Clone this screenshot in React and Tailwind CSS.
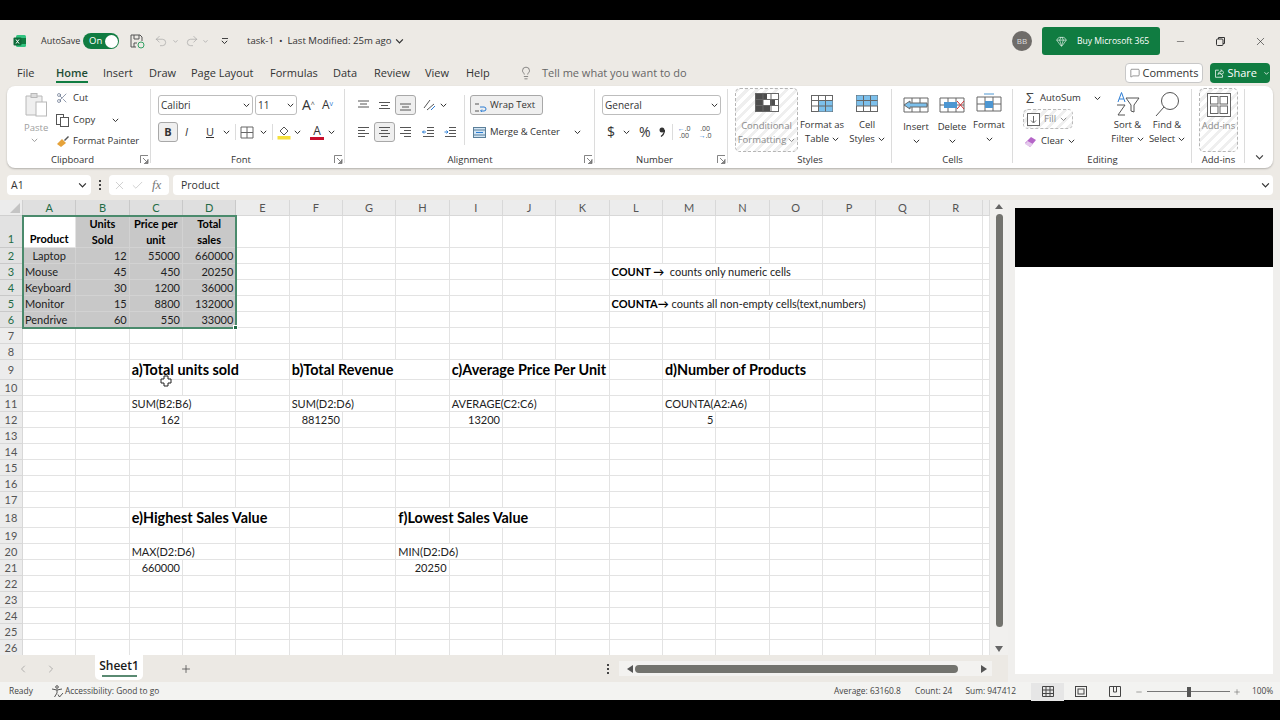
import React from 'react';
import { Scissors, Lightbulb, Gem, MessageSquare, Undo2, Redo2, X, Check, Minus, Plus, ChevronLeft, ChevronRight } from 'lucide-react';

const ui = "font-['Open_Sans',sans-serif]";
const hatch = 'bg-[repeating-linear-gradient(135deg,#efefef_0,#efefef_3px,#ffffff_3px,#ffffff_7px)]';

function Chev({ className = '' }) {
    return (
        <svg width="7" height="5" viewBox="0 0 7 5" className={'shrink-0 ' + className} fill="none" stroke="currentColor" strokeWidth="1">
            <path d="M0.8 0.8 3.5 3.6 6.2 0.8" />
        </svg>
    );
}

function Launcher() {
    return (
        <svg width="9" height="9" viewBox="0 0 9 9" className="absolute right-[2px] bottom-[4px] text-[#666]" fill="none" stroke="currentColor" strokeWidth="0.8">
            <path d="M0.5 8V0.5H8M8 4V8.5H4M3 3 7.5 7.5M7.5 5V7.5H5" />
        </svg>
    );
}

function Group({ label, width, labelPad = '', line = true, children }) {
    return (
        <div className={'relative flex flex-col shrink-0 h-full ' + width}>
            <div className="flex-1 min-h-0">{children}</div>
            <div className={'h-[17px] pt-[2px] text-center text-[9.5px] leading-[14px] text-[#333] ' + labelPad}>{label}</div>
            {line && <div className="absolute right-0 top-[3px] bottom-[5px] w-px bg-[#dcdcdc]" />}
        </div>
    );
}

function Lines({ kind }) {
    // alignment glyphs, one drawing per button
    const paths = {
        top: 'M1 2H12M3 5H10M1 8H12',
        middle: 'M1 3.500H12M3 6.500H10M1 9.500H12',
        bottom: 'M1 5H12M3 8H10M1 11H12',
        left: 'M1 1.500H12M1 4.500H8M1 7.500H12M1 10.500H8',
        center: 'M1 1.500H12M3 4.500H10M1 7.500H12M3 10.500H10',
        right: 'M1 1.500H12M5 4.500H12M1 7.500H12M5 10.500H12',
    };
    return (
        <svg width="13" height="12" viewBox="0 0 13 12" fill="none" stroke="#555" strokeWidth="1">
            <path d={paths[kind]} />
        </svg>
    );
}

function BigButton({ icon, lines, width, iconH = 'h-[31px]', chevronOwnLine }) {
    return (
        <div className={'flex flex-col items-center shrink-0 text-[#333] ' + width}>
            <div className={'flex items-center justify-center ' + iconH}>{icon}</div>
            <div className="text-[9.5px] leading-[14px] text-center whitespace-nowrap">
                {lines.map((l, i) => <div key={i} className="flex items-center justify-center gap-[3px]">{l}{i === lines.length - 1 && !chevronOwnLine && <Chev />}</div>)}
                {chevronOwnLine && <div className="flex justify-center h-[14px] items-center"><Chev /></div>}
            </div>
        </div>
    );
}

function TableIcon({ fill }) {
    return (
        <svg width="24" height="22" viewBox="0 0 24 22" fill="none" stroke="#666" strokeWidth="1">
            <rect x="1.500" y="2.500" width="21" height="16" fill="#fff" />
            {fill}
            <path d="M1.500 7.500H22.500M1.500 13H22.500M8.500 2.500V18.500M15.500 2.500V18.500" />
        </svg>
    );
}

function Clipboard() {
    return (
        <Group label="Clipboard" width="w-[144px]" labelPad="pr-[13px]">
            <Launcher />
            <div className="flex h-full">
                <div className="w-[48px] pl-[17px] pt-[6px] flex flex-col text-[#a0a0a0]">
                    <svg width="24" height="26" viewBox="0 0 24 26" fill="none" stroke="#b8b8b8">
                        <path d="M2 4H18V23H2Z" fill="#efefef" />
                        <rect x="7" y="1.500" width="6" height="4" fill="#ddd" />
                        <rect x="12" y="10" width="10.500" height="14" fill="#fff" />
                    </svg>
                    <div className="mt-[3px] text-[9.5px] leading-[14px]">Paste</div>
                    <Chev className="ml-[7px] mt-[3px]" />
                </div>
                <div className="pt-[2px] pl-[1px] text-[9.5px] text-[#333]">
                    <div className="flex items-center h-[20px] gap-[5px]"><Scissors size={12} strokeWidth={1.200} className="text-[#4a5a78]" /><span className="w-[56px]">Cut</span></div>
                    <div className="flex items-center h-[24px] gap-[4px]">
                        <svg width="13" height="13" viewBox="0 0 13 13" fill="none" stroke="#555"><rect x="0.500" y="0.500" width="7" height="10" /><rect x="4.500" y="3.500" width="8" height="9" fill="#fff" /></svg>
                        <span>Copy</span><Chev className="ml-[13px]" />
                    </div>
                    <div className="flex items-center h-[19px] gap-[3px] whitespace-nowrap">
                        <svg width="14" height="13" viewBox="0 0 14 13"><path d="M1 9 6 4 10 8 5 12Z" fill="#e5a23a" /><path d="M8 5 12 1 13 2 9 6Z" fill="#555" /></svg>
                        Format Painter
                    </div>
                </div>
            </div>
        </Group>
    );
}

function FontGroup() {
    return (
        <Group label="Font" width="w-[194px]" labelPad="pr-[14px]">
            <Launcher />
            <div className="pl-[7px] pt-[9px] text-[#333]">
                <div className="flex items-center h-[20px]">
                    <div className="w-[95px] h-[20px] rounded-[3px] border border-[#bdbdbd] flex items-center justify-between px-[2px] text-[10px]">Calibri<Chev /></div>
                    <div className="ml-[2px] w-[42px] h-[20px] rounded-[3px] border border-[#bdbdbd] flex items-center justify-between px-[2px] text-[10px]">11<Chev /></div>
                    <span className="ml-[5px] text-[14px] leading-none">A<sup className="text-[7px] text-[#444]">^</sup></span>
                    <span className="ml-[7px] text-[12px] leading-none">A<sup className="text-[7px] text-[#2b7cd3]">v</sup></span>
                </div>
                <div className="flex items-center h-[20px] mt-[7px]">
                    <div className="w-[20px] h-[20px] rounded-[3px] border border-[#a8a8a8] bg-[#efefef] flex items-center justify-center text-[11px] font-bold">B</div>
                    <span className="ml-[7px] w-[8px] italic text-[11px]">I</span>
                    <span className="ml-[13px] underline text-[11px]">U</span>
                    <Chev className="ml-[9px]" />
                    <div className="ml-[5px] w-px h-[16px] bg-[#dcdcdc]" />
                    <svg width="14" height="13" viewBox="0 0 14 13" className="ml-[4px]" fill="none" stroke="#666"><path d="M1 1H13V12H1ZM7 1V12M1 6.500H13" /></svg>
                    <Chev className="ml-[6px]" />
                    <div className="ml-[5px] w-px h-[16px] bg-[#dcdcdc]" />
                    <svg width="14" height="15" viewBox="0 0 14 15" className="ml-[4px]"><path d="M3 6 7 2 11 6 7 10Z" fill="none" stroke="#555" /><rect x="0.500" y="11" width="13" height="3.500" fill="#f5e03a" /></svg>
                    <Chev className="ml-[3px]" />
                    <div className="ml-[9px] flex flex-col items-center w-[14px] leading-[11px] text-[12px]">A<div className="w-[14px] h-[3px] bg-[#c8102e] mt-[1px]" /></div>
                    <Chev className="ml-[4px]" />
                </div>
            </div>
        </Group>
    );
}

function Alignment() {
    return (
        <Group label="Alignment" width="w-[250px]">
            <Launcher />
            <div className="flex pl-[8px] pt-[9px] text-[#333]">
                <div className="w-[112px] border-r border-[#dcdcdc] h-[50px]">
                    <div className="flex items-center h-[20px]">
                        <div className="w-[21px] flex justify-center"><Lines kind="top" /></div>
                        <div className="w-[21px] flex justify-center"><Lines kind="middle" /></div>
                        <div className="w-[21px] h-[20px] rounded-[3px] border border-[#a8a8a8] bg-[#efefef] flex justify-center items-center"><Lines kind="bottom" /></div>
                        <svg width="14" height="14" viewBox="0 0 14 14" className="ml-[6px]" fill="none" stroke="#555"><path d="M2 10 8 2M5 12 12 6" /><path d="M9 12 13 8" stroke="#2b7cd3" /></svg>
                        <Chev className="ml-[4px]" />
                    </div>
                    <div className="flex items-center h-[20px] mt-[7px]">
                        <div className="w-[21px] flex justify-center"><Lines kind="left" /></div>
                        <div className="w-[21px] h-[20px] rounded-[3px] border border-[#a8a8a8] bg-[#efefef] flex justify-center items-center"><Lines kind="center" /></div>
                        <div className="w-[21px] flex justify-center"><Lines kind="right" /></div>
                        <svg width="13" height="12" viewBox="0 0 13 12" className="ml-[6px]" fill="none" stroke="#555"><path d="M5 1.500H12M5 4.500H12M5 7.500H12M1 10.500H12" /><path d="M4 6H0.500M2 4.500 0.500 6 2 7.500" stroke="#2b7cd3" /></svg>
                        <svg width="13" height="12" viewBox="0 0 13 12" className="ml-[9px]" fill="none" stroke="#555"><path d="M5 1.500H12M5 4.500H12M5 7.500H12M1 10.500H12" /><path d="M0.500 6H4M2.500 4.500 4 6 2.500 7.500" stroke="#2b7cd3" /></svg>
                    </div>
                </div>
                <div className="pl-[5px]">
                    <div className="w-[73px] h-[20px] rounded-[3px] border border-[#a8a8a8] bg-[#efefef] flex items-center pl-[3px] gap-[3px] text-[9.5px] whitespace-nowrap">
                        <svg width="13" height="13" viewBox="0 0 13 13" fill="none" stroke="#555"><path d="M1 5H5M1 12H5" /><path d="M6 8H10Q12 8 12 10T10 12H7M8 10.500 6.500 12 8 13" stroke="#2b7cd3" /></svg>
                        Wrap Text
                    </div>
                    <div className="flex items-center h-[20px] mt-[7px] pl-[3px] text-[9.5px] whitespace-nowrap">
                        <svg width="13" height="13" viewBox="0 0 13 13" fill="none" stroke="#5b7f99"><rect x="0.500" y="1.500" width="12" height="10" fill="#d3e6f5" /><path d="M0.500 4H12.500M0.500 9H12.500" /><path d="M3 6.500H10" stroke="#2b7cd3" /></svg>
                        <span className="ml-[4px]">Merge &amp; Center</span>
                        <Chev className="ml-[14px]" />
                    </div>
                </div>
            </div>
        </Group>
    );
}

function NumberGroup() {
    return (
        <Group label="Number" width="w-[133px]" labelPad="pr-[14px]">
            <Launcher />
            <div className="pl-[7px] pt-[9px] text-[#333]">
                <div className="w-[119px] h-[20px] rounded-[3px] border border-[#bdbdbd] flex items-center justify-between px-[2px] text-[10px]">General<Chev /></div>
                <div className="flex items-center h-[20px] mt-[7px]">
                    <span className="ml-[5px] text-[14px] leading-none">$</span>
                    <Chev className="ml-[8px]" />
                    <span className="ml-[9px] text-[14px] leading-none">%</span>
                    <svg width="6" height="10" viewBox="0 0 6 10" className="ml-[8px]"><circle cx="3" cy="3" r="2.500" fill="#333" /><path d="M5.500 3Q5.500 7 2 9.500" stroke="#333" strokeWidth="1.300" fill="none" /></svg>
                    <div className="ml-[7px] w-px h-[16px] bg-[#dcdcdc]" />
                    <span className="ml-[3px] text-[7px] leading-[7px] text-center text-[#444] w-[17px] whitespace-nowrap"><span className="text-[#2b7cd3]">←</span>.0<br />.00</span>
                    <span className="ml-[4px] text-[7px] leading-[7px] text-center text-[#444] w-[17px] whitespace-nowrap">.00<br /><span className="text-[#2b7cd3]">→</span>.0</span>
                </div>
            </div>
        </Group>
    );
}

function Styles() {
    return (
        <Group label="Styles" width="w-[164px]">
            <div className="flex pl-[7px] pt-[2px]">
                <div className={'w-[63px] h-[64px] rounded-[5px] border border-dashed border-[#b5b5b5] flex flex-col items-center pt-[4px] text-[#8a8a8a] ' + hatch}>
                    <svg width="24" height="20" viewBox="0 0 24 20" fill="none" stroke="#666">
                        <rect x="0.500" y="0.500" width="23" height="18" fill="#fff" />
                        <path d="M1 1H8V18H1ZM8 1H12V6H8ZM8 12H15V18H8ZM15 6H20V12H15Z" fill="#4d4d4d" stroke="none" />
                        <path d="M8 0.500V18.500M16 0.500V18.500M0.500 6.500H23.500M0.500 12.500H23.500" />
                    </svg>
                    <div className="text-[9.5px] leading-[14px] mt-[6px] text-center whitespace-nowrap">Conditional</div>
                    <div className="text-[9.5px] leading-[14px] flex items-center gap-[2px] whitespace-nowrap">Formatting<Chev /></div>
                </div>
                <BigButton iconH="h-[28px]" width="w-[48px] mt-[2px]" lines={['Format as', 'Table']} icon={<TableIcon fill={<path d="M8.500 7.500H22.500V18.500H8.500Z" fill="#7cc0ec" stroke="none" />} />} />
                <BigButton iconH="h-[28px]" width="w-[42px] mt-[2px]" lines={['Cell', 'Styles']} icon={<TableIcon fill={<path d="M1.500 2.500H22.500V13H1.500Z" fill="#7cc0ec" stroke="none" />} />} />
            </div>
        </Group>
    );
}

function Cells() {
    const bar = (extra) => (
        <svg width="26" height="22" viewBox="0 0 26 22" fill="none" stroke="#666">
            <path d="M1 4H25V18H1ZM9 4V18M17 4V18M1 11H25" />
            {extra}
        </svg>
    );
    return (
        <Group label="Cells" width="w-[121px]">
            <div className="flex pl-[6px] pt-[3px]">
                <BigButton chevronOwnLine width="w-[36px]" lines={['Insert']} icon={bar(<path d="M1 11 7 7V9H24V13H7V15Z" fill="#7cc0ec" />)} />
                <BigButton chevronOwnLine width="w-[36px]" lines={['Delete']} icon={bar(<g><path d="M5 8H18V14H5Z" fill="#4d96d1" stroke="none" /><path d="M18 7 25 15M25 7 18 15" stroke="#d13438" /></g>)} />
                <BigButton chevronOwnLine iconH="h-[29px]" width="w-[38px]" lines={['Format']} icon={bar(<g><path d="M9 8H17V15H9Z" fill="#4d96d1" stroke="none" /><path d="M8 1H18" stroke="#4d96d1" /></g>)} />
            </div>
        </Group>
    );
}

function Editing() {
    return (
        <Group label="Editing" width="w-[179px]">
            <div className="flex">
                <div className="w-[100px] pl-[10px] pt-[2px] text-[9.5px] text-[#333]">
                    <div className="flex items-center h-[20px] whitespace-nowrap">
                        <span className="w-[17px] pl-[3px] text-[14px] leading-none text-[#444]">Σ</span>AutoSum<Chev className="ml-[13px]" />
                    </div>
                    <div className={'mt-[1px] w-[50px] h-[20px] rounded-[5px] border border-dashed border-[#bbb] flex items-center pl-[3px] gap-[4px] text-[#8a8a8a] ' + hatch}>
                        <svg width="13" height="13" viewBox="0 0 13 13" fill="#fff" stroke="#666"><rect x="0.500" y="0.500" width="12" height="12" /><path d="M6.500 3V9.500M4 7.500 6.500 10 9 7.500" fill="none" /></svg>
                        Fill<Chev />
                    </div>
                    <div className="flex items-center h-[22px] mt-[1px] gap-[4px] pl-[1px]">
                        <svg width="13" height="13" viewBox="0 0 13 13"><path d="M1 8 7 2 12 5 6 12Z" fill="#b565c8" /><path d="M3.500 6 9 9 6 12 1 9Z" fill="#e4c8ec" /></svg>
                        Clear<Chev />
                    </div>
                </div>
                <BigButton iconH="h-[29px]" width="w-[39px] -ml-[5px] mt-[3px]" lines={['Sort &', 'Filter']} icon={
                    <svg width="26" height="26" viewBox="0 0 26 26" fill="none" stroke="#555">
                        <path d="M3 11 6.500 1.500 10 11M4.300 8H8.700" stroke="#2b7cd3" />
                        <path d="M2 14H10L3 24H10" />
                        <path d="M11 7H24L19 14V21L16 20V14Z" />
                    </svg>
                } />
                <BigButton iconH="h-[29px]" width="w-[40px] mt-[3px]" lines={['Find &', 'Select']} icon={
                    <svg width="26" height="26" viewBox="0 0 26 26" fill="none" stroke="#555"><circle cx="16" cy="10" r="8.500" /><path d="M10 16 2 25" /></svg>
                } />
            </div>
        </Group>
    );
}

function Ribbon() {
    return (
        <div className="flex h-[82px] mx-[7px] bg-white rounded-lg shadow-[0_1px_2px_rgba(0,0,0,0.25)] shrink-0">
            <Clipboard />
            <FontGroup />
            <Alignment />
            <NumberGroup />
            <Styles />
            <Cells />
            <Editing />
            <Group label="Add-ins" width="w-[53px]">
                <div className={'ml-[7px] mt-[2px] w-[39px] h-[64px] rounded-[5px] border border-dashed border-[#b5b5b5] flex flex-col items-center pt-[4px] text-[#8a8a8a] ' + hatch}>
                    <svg width="24" height="24" viewBox="0 0 24 24" fill="#fff" stroke="#666"><rect x="0.500" y="0.500" width="23" height="23" /><rect x="3.500" y="3.500" width="7.500" height="7.500" /><rect x="13" y="3.500" width="7.500" height="7.500" /><rect x="3.500" y="13" width="7.500" height="7.500" /><rect x="13" y="13" width="7.500" height="7.500" /></svg>
                    <div className="text-[9.5px] leading-[14px] mt-[2px] whitespace-nowrap">Add-ins</div>
                </div>
            </Group>
            <div className="flex-1 flex items-end justify-center pb-[8px] text-[#444]"><Chev className="scale-125" /></div>
        </div>
    );
}

function TitleBar() {
    return (
        <div className="flex items-center h-[42px] pl-[13px] shrink-0 text-[#333]">
            <svg width="14" height="14" viewBox="0 0 14 14">
                <rect x="3" y="1" width="10" height="12" rx="1.500" fill="#33c481" />
                <rect x="8" y="4" width="5" height="6" fill="#107c41" />
                <rect x="0.500" y="3.500" width="8" height="8" rx="1" fill="#0f6b3a" />
                <path d="M3 5.500 6 9.500M6 5.500 3 9.500" stroke="#fff" strokeWidth="1" />
            </svg>
            <span className="ml-[14px] w-[42px] text-[9px]">AutoSave</span>
            <div className="w-[36px] h-[16px] rounded-full bg-[#107c41] flex items-center justify-between pl-[6px] pr-[1px] text-[9.5px] text-white">On<div className="w-[13px] h-[13px] rounded-full bg-white" /></div>
            <svg width="15" height="15" viewBox="0 0 15 15" className="ml-[11px]" fill="none" stroke="#555"><path d="M1 1H10L12 3V7M1 1V13H6M4 1V5H9V1M4 13V9H7" /><circle cx="11" cy="11" r="3" stroke="#33a164" /></svg>
            <Undo2 size={14} strokeWidth={1} className="ml-[9px] text-[#9a9a9a]" />
            <Chev className="ml-[4px] scale-75 text-[#aaa]" />
            <Redo2 size={14} strokeWidth={1} className="ml-[6px] text-[#9a9a9a]" />
            <Chev className="ml-[3px] scale-75 text-[#aaa]" />
            <div className="ml-[12px] flex flex-col items-center w-[7px]"><div className="w-[6px] h-px bg-[#444] mb-[1px]" /><Chev /></div>
            <span className="ml-[19px] text-[9.6px] whitespace-nowrap">task-1&nbsp; •&nbsp; Last Modified: 25m ago</span>
            <Chev className="ml-[4px] scale-125" />
            <div className="ml-auto w-[20px] h-[20px] rounded-full bg-[#6f6c69] text-[#ddd] text-[8px] flex items-center justify-center">BB</div>
            <div className="ml-[10px] w-[118px] h-[28px] rounded-[3px] bg-[#107c41] text-white text-[8.6px] flex items-center pl-[14px] gap-[10px] whitespace-nowrap">
                <Gem size={11} strokeWidth={1.300} />Buy Microsoft 365
            </div>
            <div className="w-[40px] flex justify-center"><Minus size={11} strokeWidth={1.200} /></div>
            <div className="w-[40px] flex justify-center">
                <svg width="9" height="9" viewBox="0 0 9 9" fill="none" stroke="#333"><rect x="0.500" y="2" width="6.500" height="6.500" rx="1" /><path d="M2.500 2V0.500H8.500V6.500H7" /></svg>
            </div>
            <div className="w-[40px] flex justify-center"><X size={13} strokeWidth={1.200} /></div>
        </div>
    );
}

const tabs = [
    ['File', 'w-[39px]'], ['Home', 'w-[47px]'], ['Insert', 'w-[46px]'], ['Draw', 'w-[42px]'], ['Page Layout', 'w-[79px]'],
    ['Formulas', 'w-[63px]'], ['Data', 'w-[41px]'], ['Review', 'w-[51px]'], ['View', 'w-[41px]'], ['Help', 'w-[53px]'],
];

function TabBar() {
    return (
        <div className="flex items-center h-[24px] pb-[2px] pl-[17px] pr-[10px] shrink-0 text-[11px] text-[#333]">
            {tabs.map(([name, width]) => (
                <div key={name} className={'relative whitespace-nowrap ' + width}>
                    {name === 'Home' ? (
                        <span className="inline-block border-b-2 border-[#107c41] font-semibold text-[#1d4d34] leading-[16px] -mb-[2px]">{name}</span>
                    ) : name}
                </div>
            ))}
            <Lightbulb size={14} strokeWidth={1} className="text-[#444]" />
            <span className="ml-[9px] text-[#666] whitespace-nowrap">Tell me what you want to do</span>
            <div className="ml-auto w-[78px] h-[20px] rounded-[4px] border border-[#c8c8c8] bg-white flex items-center justify-center gap-[3px]">
                <MessageSquare size={10} strokeWidth={1.200} />Comments
            </div>
            <div className="ml-[7px] w-[60px] h-[20px] rounded-[4px] bg-[#107c41] text-white flex items-center pl-[5px] gap-[3px]">
                <svg width="10" height="10" viewBox="0 0 10 10" fill="none" stroke="#fff" strokeWidth="0.800"><path d="M4 2H0.500V9.500H8V7M3 6.500Q3.500 3.500 6.500 3.500V1.500L9.500 4.500 6.500 7V5.500Q4 5.500 3 6.500Z" /></svg>
                Share<Chev className="ml-[3px] scale-75" />
            </div>
        </div>
    );
}

function FormulaBar() {
    return (
        <div className="flex h-[20px] mt-[7px] mx-[7px] shrink-0 text-[10.5px] text-[#333]">
            <div className="w-[84px] bg-white rounded-[4px] flex items-center justify-between pt-px pl-[4px] pr-[5px]">A1<Chev className="scale-125" /></div>
            <div className="w-[18px] flex flex-col items-center justify-center gap-[2px]">
                <div className="w-[2px] h-[2px] bg-[#444]" /><div className="w-[2px] h-[2px] bg-[#444]" /><div className="w-[2px] h-[2px] bg-[#444]" />
            </div>
            <div className="w-[60px] bg-white rounded-[4px] flex items-center pl-[4px] gap-[5px] text-[#aaa]">
                <X size={13} strokeWidth={1} /><Check size={13} strokeWidth={1} /><span className="font-['Liberation_Serif',serif] italic text-[13px] text-[#777] ml-[3px]">fx</span>
            </div>
            <div className="ml-[4px] flex-1 bg-white rounded-[4px] flex items-center justify-between pt-px pl-[8px] pr-[4px] text-[#333]">Product<Chev className="scale-125" /></div>
        </div>
    );
}

const colNames = 'ABCDEFGHIJKLMNOPQR'.split('');
const rowNums = Array.from({ length: 26 }, (_, i) => i + 1);

const H = 'font-bold text-[14.4px] text-black';
const B = 'font-bold text-black';
const cells = {
    A1: { t: 'Product', a: 'c', cls: B },
    B1: { t: <>Units<br />Sold</>, a: 'c', cls: B },
    C1: { t: <>Price per<br />unit</>, a: 'c', cls: B },
    D1: { t: <>Total<br />sales</>, a: 'c', cls: B },
    A2: { t: 'Laptop', a: 'c' }, B2: { t: '12', a: 'r' }, C2: { t: '55000', a: 'r' }, D2: { t: '660000', a: 'r' },
    A3: { t: 'Mouse' }, B3: { t: '45', a: 'r' }, C3: { t: '450', a: 'r' }, D3: { t: '20250', a: 'r' },
    A4: { t: 'Keyboard' }, B4: { t: '30', a: 'r' }, C4: { t: '1200', a: 'r' }, D4: { t: '36000', a: 'r' },
    A5: { t: 'Monitor' }, B5: { t: '15', a: 'r' }, C5: { t: '8800', a: 'r' }, D5: { t: '132000', a: 'r' },
    A6: { t: 'Pendrive' }, B6: { t: '60', a: 'r' }, C6: { t: '550', a: 'r' }, D6: { t: '33000', a: 'r' },
    L3: { t: <><b className="text-black">COUNT →</b>&nbsp; counts only numeric cells</>, span: 4 },
    L5: { t: <><b className="text-black">COUNTA→</b> counts all non-empty cells(text,numbers)</>, span: 5 },
    C9: { t: 'a)Total units sold', span: 3, cls: H },
    F9: { t: 'b)Total Revenue', span: 3, cls: H },
    I9: { t: 'c)Average Price Per Unit', span: 3, cls: H },
    M9: { t: 'd)Number of Products', span: 3, cls: H },
    C11: { t: 'SUM(B2:B6)', span: 2 }, F11: { t: 'SUM(D2:D6)', span: 2 },
    I11: { t: 'AVERAGE(C2:C6)', span: 2 }, M11: { t: 'COUNTA(A2:A6)', span: 2 },
    C12: { t: '162', a: 'r' }, F12: { t: '881250', a: 'r' }, I12: { t: '13200', a: 'r' }, M12: { t: '5', a: 'r' },
    C18: { t: 'e)Highest Sales Value', span: 3, cls: H },
    H18: { t: 'f)Lowest Sales Value', span: 3, cls: H },
    C20: { t: 'MAX(D2:D6)', span: 2 }, H20: { t: 'MIN(D2:D6)', span: 2 },
    C21: { t: '660000', a: 'r' }, H21: { t: '20250', a: 'r' },
};

function Row({ n }) {
    const out = [];
    const selected = n <= 6;
    out.push(
        <div key="h" className={'flex justify-center pt-px border-r border-b text-[11px] ' + (selected ? 'bg-[#e2e2e2] border-[#c9c9c9] text-[#1f6b45]' : 'bg-[#ececec] border-[#d8d8d8] text-[#555]') + (n === 1 ? ' items-end' : ' items-center')}>{n}</div>
    );
    for (let c = 0; c < 19; c++) {
        const id = (colNames[c] || 'S') + n;
        const cell = cells[id];
        const span = cell && cell.span ? cell.span : 1;
        const inSel = selected && c < 4 && id !== 'A1';
        const align = cell && cell.a === 'c' ? 'justify-center text-center' : cell && cell.a === 'r' ? 'justify-end' : 'justify-start';
        out.push(
            <div
                key={id}
                style={span > 1 ? { gridColumn: 'span ' + span } : undefined}
                className={'flex whitespace-nowrap pt-px px-[2px] border-r border-b ' + align + ' ' + (inSel ? 'bg-[#c8c8c8] border-[#d2d2d2]' : 'bg-white border-[#e3e3e3]') + (n === 1 && id !== 'A1' ? ' leading-[16px]' : '') + (id === 'A1' ? ' items-end' : ' items-center') + (cell && cell.cls ? ' ' + cell.cls : '')}
            >
                {cell ? <span>{cell.t}</span> : null}
            </div>
        );
        c += span - 1;
    }
    return out;
}

function Sheet() {
    return (
        <div className="relative grid w-[990px] h-[455px] overflow-hidden grid-cols-[23px_repeat(18,53.333px)_7px] grid-rows-[16px_32px_repeat(7,16px)_20px_repeat(8,16px)_20px_repeat(8,16px)] font-['Lato',sans-serif] text-[11px] text-[#222]">
            <div className="bg-[#ececec] border-r border-b border-[#d0d0d0] flex items-end justify-end p-[2px]">
                <div className="w-0 h-0 border-l-[10px] border-l-transparent border-b-[10px] border-b-[#c4c4c4]" />
            </div>
            {colNames.concat('').map((c, i) => (
                <div key={i} className={'flex items-center justify-center pt-px border-r border-b text-[11px] ' + (i < 4 ? 'bg-[#dfdfdf] border-[#c9c9c9] text-[#1f6b45] border-b-[#2f7d5b]' : 'bg-[#ececec] border-[#d8d8d8] text-[#555]')}>{c}</div>
            ))}
            {rowNums.map(n => <Row key={n} n={n} />)}
            {/* selection frame sits on top of A1:D6 */}
            <div className="absolute left-[22px] top-[15px] w-[215px] h-[114px] border-2 border-[#4a8a6c] pointer-events-none">
                <div className="absolute -right-[3px] -bottom-[3px] w-[5px] h-[5px] bg-[#1f6b45] border border-white" />
            </div>
            {/* cross cursor */}
            <svg width="12" height="12" viewBox="0 0 12 12" className="absolute left-[160px] top-[175px]" fill="#fff" stroke="#222"><path d="M4 1H8V4H11V8H8V11H4V8H1V4H4Z" /></svg>
        </div>
    );
}

function VScroll() {
    return (
        <div className="w-[18px] bg-[#f1f0ee] flex flex-col items-center pt-[4px] text-[#666]">
            <div className="w-0 h-0 border-x-[4px] border-x-transparent border-b-[5px] border-b-[#666]" />
            <div className="w-[7px] h-[413px] mt-[5px] rounded-full bg-[#73736e]" />
            <div className="mt-[19px] w-0 h-0 border-x-[4px] border-x-transparent border-t-[6px] border-t-[#666]" />
        </div>
    );
}

function SheetTabs() {
    return (
        <div className="flex items-center h-[27px] bg-[#ece9e4] text-[#333]">
            <ChevronLeft size={12} strokeWidth={1.200} className="ml-[17px] text-[#888]" />
            <ChevronRight size={12} strokeWidth={1.200} className="ml-[16px] text-[#888]" />
            <div className="ml-[38px] w-[48px] h-[25px] self-start bg-white rounded-b-[5px] flex flex-col items-center pt-[3px]">
                <span className="text-[12px] leading-[16px] font-semibold text-[#1a1a1a]">Sheet1</span>
                <div className="w-[35px] h-[2px] mt-[1px] bg-[#5a8a72]" />
            </div>
            <Plus size={12} strokeWidth={1.500} className="ml-[37px] text-[#444]" />
            <div className="ml-[415px] flex flex-col gap-[2px]">
                <div className="w-[2px] h-[2px] bg-[#444]" /><div className="w-[2px] h-[2px] bg-[#444]" /><div className="w-[2px] h-[2px] bg-[#444]" />
            </div>
            <div className="ml-[10px] w-[373px] h-[15px] bg-[#f3f2f0] flex items-center pl-[8px]">
                <div className="w-0 h-0 border-y-[4px] border-y-transparent border-r-[6px] border-r-[#555]" />
                <div className="ml-[2px] w-[323px] h-[8px] rounded-full bg-[#73736e]" />
                <div className="ml-[23px] w-0 h-0 border-y-[4px] border-y-transparent border-l-[6px] border-l-[#555]" />
            </div>
        </div>
    );
}

function StatusBar() {
    return (
        <div className="flex items-center h-[18px] bg-[#f3f3f1] shrink-0 pl-[9px] pt-px text-[8.4px] text-[#444] whitespace-nowrap">
            <span className="w-[42px]">Ready</span>
            <svg width="13" height="13" viewBox="0 0 13 13" fill="none" stroke="#444" strokeWidth="0.900"><circle cx="6" cy="2" r="1.300" /><path d="M1 4 6 5 11 4M6 5V8L3.500 12M7 9.500 8.500 12 12 8" /></svg>
            <span className="ml-[1px]">Accessibility: Good to go</span>
            <span className="ml-auto">Average: 63160.8</span>
            <span className="ml-[14px]">Count: 24</span>
            <span className="ml-[13px]">Sum: 947412</span>
            <div className="ml-[15px] w-[33px] h-[18px] bg-[#e6e6e6] flex items-center justify-center">
                <svg width="12" height="11" viewBox="0 0 12 11" fill="none" stroke="#444"><path d="M0.500 0.500H11.500V10.500H0.500ZM4 0.500V10.500M8 0.500V10.500M0.500 4H11.500M0.500 7.500H11.500" /></svg>
            </div>
            <div className="w-[34px] flex justify-center">
                <svg width="12" height="11" viewBox="0 0 12 11" fill="none" stroke="#444"><rect x="0.500" y="0.500" width="11" height="10" /><rect x="3" y="3" width="6" height="5" /></svg>
            </div>
            <div className="w-[33px] flex justify-center">
                <svg width="12" height="11" viewBox="0 0 12 11" fill="none" stroke="#444"><path d="M0.500 0.500H11.500V10.500H0.500ZM4.500 0.500V6H7.500V0.500" /></svg>
            </div>
            <Minus size={8} className="ml-[4px] text-[#777]" />
            <div className="ml-[4px] w-[83px] h-px bg-[#777] flex justify-center items-center"><div className="w-[4px] h-[10px] bg-[#555]" /></div>
            <Plus size={8} className="ml-[3px] text-[#777]" />
            <span className="ml-[11px] w-[28px]">100%</span>
        </div>
    );
}

export default function App() {
    return (
        <div className={'w-[1280px] h-[720px] bg-black py-[20px] overflow-hidden ' + ui}>
            <div className="h-[680px] flex flex-col bg-[#edeae5]">
                <TitleBar />
                <TabBar />
                <Ribbon />
                <FormulaBar />
                <div className="flex h-[482px] mt-[5px] shrink-0">
                    <div className="w-[1008px] flex flex-col shrink-0">
                        <div className="flex h-[455px]">
                            <Sheet />
                            <VScroll />
                        </div>
                        <SheetTabs />
                    </div>
                    <div className="flex-1 bg-[#f0efed] px-[7px] pt-[8px] pb-[8px]">
                        <div className="h-full bg-white">
                            <div className="h-[59px] bg-black" />
                        </div>
                    </div>
                </div>
                <StatusBar />
            </div>
        </div>
    );
}
